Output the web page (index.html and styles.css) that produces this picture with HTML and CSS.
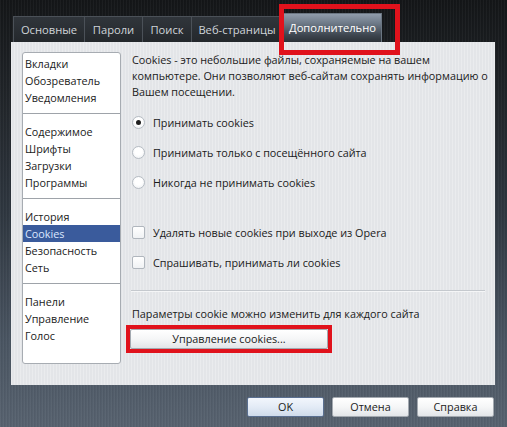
FILE: index.html
```html
<!DOCTYPE html>
<html lang="ru">
<head>
<meta charset="utf-8">
<link rel="stylesheet" href="styles.css">
</head>
<body>
<div class="window">
  <div class="tabs">
    <div class="tab t1">Основные</div>
    <div class="tab t2">Пароли</div>
    <div class="tab t3">Поиск</div>
    <div class="tab t4">Веб-страницы</div>
    <div class="tab active">Дополнительно</div>
    <div class="mark-tab"></div>
  </div>
  <div class="panel">
    <div class="sidebar">
      <div class="group first">
        <div class="item">Вкладки</div>
        <div class="item">Обозреватель</div>
        <div class="item">Уведомления</div>
      </div>
      <div class="group">
        <div class="item">Содержимое</div>
        <div class="item">Шрифты</div>
        <div class="item">Загрузки</div>
        <div class="item">Программы</div>
      </div>
      <div class="group">
        <div class="item">История</div>
        <div class="item selected">Cookies</div>
        <div class="item">Безопасность</div>
        <div class="item">Сеть</div>
      </div>
      <div class="group last">
        <div class="item">Панели</div>
        <div class="item">Управление</div>
        <div class="item">Голос</div>
      </div>
    </div>
    <div class="content">
      <p class="intro">Cookies - это небольшие файлы, сохраняемые на вашем компьютере. Они позволяют веб-сайтам сохранять информацию о Вашем посещении.</p>
      <div class="options">
        <div class="row"><span class="radio checked"></span>Принимать cookies</div>
        <div class="row"><span class="radio"></span>Принимать только с посещённого сайта</div>
        <div class="row"><span class="radio"></span>Никогда не принимать cookies</div>
      </div>
      <div class="options checks">
        <div class="row"><span class="check"></span>Удалять новые cookies при выходе из Opera</div>
        <div class="row"><span class="check"></span>Спрашивать, принимать ли cookies</div>
      </div>
      <div class="separator"></div>
      <p class="note">Параметры cookie можно изменить для каждого сайта</p>
      <div class="mark-button"><button class="btn wide">Управление cookies...</button></div>
    </div>
  </div>
  <div class="footer">
    <button class="btn dlg default">OK</button>
    <button class="btn dlg">Отмена</button>
    <button class="btn dlg">Справка</button>
  </div>
</div>
</body>
</html>
```
FILE: styles.css
```css
html, body {
  margin: 0;
  padding: 0;
}
body {
  width: 507px;
  height: 427px;
  overflow: hidden;
  font-family: "Open Sans", "Noto Sans", sans-serif;
  font-size: 10.8px;
  color: #1a1a1a;
  background:
    repeating-linear-gradient(90deg, rgba(255,255,255,0.035) 0 1px, rgba(0,0,0,0.04) 1px 2px, transparent 2px 3px),
    linear-gradient(180deg, #141618 0%, #1f2327 20%, #2f3740 50%, #4a5562 80%, #57626f 100%);
}
.window {
  padding: 16px 12px 0 11px;
}
.tabs {
  position: relative;
  display: flex;
  align-items: flex-end;
  height: 26px;
  padding-left: 2px;
}
.tab {
  height: 26px;
  line-height: 25px;
  text-align: center;
  white-space: nowrap;
  color: #cfd4d9;
  font-size: 11.2px;
  background: linear-gradient(180deg, #30353b, #24282c);
  border-top: 1px solid #4b5158;
  border-left: 1px solid #4b5158;
  box-sizing: border-box;
}
.t1 { width: 71px; }
.t2 { width: 58px; }
.t3 { width: 49px; }
.t4 { width: 92px; border-right: 1px solid #4b5158; }
.tab.active {
  height: 29px;
  line-height: 28px;
  width: 99px;
  color: #ffffff;
  border: 1px solid #6b7682;
  border-bottom: none;
  background: linear-gradient(180deg, #909cab 0%, #6c7886 35%, #3e4650 75%, #2c3238 100%);
}
.mark-tab {
  position: absolute;
  left: 268px;
  top: -12px;
  width: 111px;
  height: 41px;
  border: 5px solid #e0121c;
  pointer-events: none;
  z-index: 2;
}
.panel {
  display: flex;
  width: 484px;
  height: 343px;
  box-sizing: border-box;
  padding: 10px 4px 0 11px;
  background:
    repeating-linear-gradient(90deg, rgba(255,255,255,0.25) 0 1px, transparent 1px 3px),
    #e3e5e8;
}
.sidebar {
  width: 99px;
  height: 312px;
  box-sizing: border-box;
  background: #ffffff;
  border: 1px solid #a7acb2;
  border-radius: 3px;
  flex-shrink: 0;
}
.group {
  padding: 9px 0 7px;
  border-bottom: 1px solid #9ea3a9;
}
.group.first {
  padding-top: 2px;
}
.group.last {
  border-bottom: none;
}
.item {
  height: 17px;
  line-height: 17px;
  padding-left: 2px;
  white-space: nowrap;
}
.item.selected {
  background: #3a5b9c;
  color: #dce7ff;
}
.content {
  margin-left: 11px;
  flex: 1;
}
.intro {
  margin: 0;
  line-height: 16px;
  width: 358px;
}
.options {
  margin-top: 7px;
}
.options.checks {
  margin-top: 20px;
}
.row {
  height: 30px;
  display: flex;
  align-items: center;
  white-space: nowrap;
}
.radio {
  width: 13px;
  height: 13px;
  box-sizing: border-box;
  border-radius: 50%;
  border: 1px solid #b6bcc3;
  background: radial-gradient(circle at 50% 40%, #ffffff 40%, #e9ecef 100%);
  margin: 0 8px 0 0;
  display: inline-flex;
  align-items: center;
  justify-content: center;
}
.radio.checked::after {
  content: "";
  width: 5px;
  height: 5px;
  border-radius: 50%;
  background: #1f1f1f;
}
.check {
  width: 13px;
  height: 13px;
  box-sizing: border-box;
  border: 1px solid #b0b6bd;
  border-radius: 2px;
  background: linear-gradient(180deg, #ffffff, #f0f2f4);
  margin: 0 8px 0 0;
}
.separator {
  margin-top: 13px;
  height: 1px;
  width: 354px;
  margin-left: -1px;
  background: #c5c9ce;
  border-bottom: 1px solid #f5f6f7;
}
.note {
  margin: 14px 0 0;
  line-height: 16px;
}
.mark-button {
  display: inline-block;
  margin: 3px 0 0 -6px;
  border: 4px solid #e0121c;
}
.btn {
  font-family: inherit;
  font-size: 10.8px;
  color: #1a1a1a;
  border: 1px solid #a3a9b0;
  border-radius: 2px;
  background: linear-gradient(180deg, #ffffff 0%, #f5f6f7 50%, #e2e5e8 100%);
  padding: 0;
  height: 20px;
  line-height: 18px;
}
.btn.wide {
  width: 198px;
  display: block;
}
.footer {
  display: flex;
  justify-content: flex-end;
  gap: 8px;
  margin-top: 12px;
  padding-right: 1px;
}
.btn.dlg {
  width: 77px;
}
.btn.default {
  border-color: #5a6f90;
  background: linear-gradient(180deg, #f2f6fc 0%, #e3ebf6 50%, #cfdbea 100%);
}
```
